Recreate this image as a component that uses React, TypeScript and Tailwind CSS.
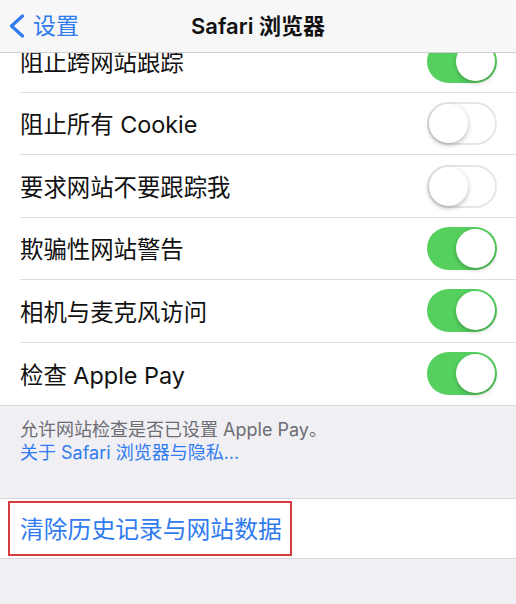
import React from "react";

const font = "font-['Inter','Noto_Sans_CJK_SC',sans-serif]";

function Toggle({ on }: { on: boolean }) {
  return on ? (
    <div className="flex h-[43px] w-[70px] shrink-0 items-center justify-end rounded-full bg-[#55cf5e] p-[2px]">
      <div className="h-[39px] w-[39px] rounded-full bg-white shadow-[0_2px_4px_rgba(0,0,0,0.25)]" />
    </div>
  ) : (
    <div className="flex h-[43px] w-[70px] shrink-0 items-center justify-start rounded-full border-2 border-[#e6e6ea] bg-white">
      <div className="h-[39px] w-[39px] rounded-full bg-white shadow-[0_2px_5px_rgba(0,0,0,0.28)]" />
    </div>
  );
}

function Row({ label, on, last }: { label: string; on: boolean; last?: boolean }) {
  return (
    <div className="flex h-[62.4px] bg-white pl-5">
      <div
        className={
          "flex flex-1 items-center justify-between pr-[19px] " +
          (last ? "" : "border-b border-[#dedde2]")
        }
      >
        <span className="pt-[3px] text-[23.4px] leading-none text-[#111]">{label}</span>
        <Toggle on={on} />
      </div>
    </div>
  );
}

export default function App() {
  return (
    <div className={"flex h-[604px] w-[516px] flex-col overflow-hidden bg-[#efeff4] " + font}>
      <div className="relative z-10 flex h-[53px] shrink-0 items-center border-b border-[#cfcfd3] bg-[#f7f7f8]">
        <div className="flex w-[130px] items-center pl-[8px] text-[#2f7bef]">
          <svg width="18" height="24" viewBox="0 0 18 24" className="mr-[7px]">
            <path d="M14.5 2 L3.5 12 L14.5 22" fill="none" stroke="currentColor" strokeWidth="3.2" strokeLinecap="round" strokeLinejoin="round" />
          </svg>
          <span className="text-[23px] leading-none">设置</span>
        </div>
        <div className="flex flex-1 justify-center pr-[130px]">
          <span className="whitespace-nowrap text-[22px] font-semibold leading-none text-[#111]">
            Safari 浏览器
          </span>
        </div>
      </div>

      <div className="-mt-[22.4px] flex flex-col border-b border-[#d8d8dc]">
        <Row label="阻止跨网站跟踪" on />
        <Row label="阻止所有 Cookie" on={false} />
        <Row label="要求网站不要跟踪我" on={false} />
        <Row label="欺骗性网站警告" on />
        <Row label="相机与麦克风访问" on />
        <Row label="检查 Apple Pay" on last />
      </div>

      <div className="flex h-[92px] flex-col px-5 pt-[12px] text-[18px] leading-[23px]">
        <span className="text-[#6d6d72]">允许网站检查是否已设置 Apple Pay。</span>
        <span className="text-[#2f7bef]">关于 Safari 浏览器与隐私...</span>
      </div>

      <div className="flex h-[61px] items-center border-y border-[#d8d8dc] bg-white">
        <div className="ml-2 flex h-[55px] items-center border-2 border-[#d63b3d] pl-[10px] pr-[8px]">
          <span className="pt-[2px] text-[23.8px] leading-none text-[#2f7bef]">清除历史记录与网站数据</span>
        </div>
      </div>
    </div>
  );
}
